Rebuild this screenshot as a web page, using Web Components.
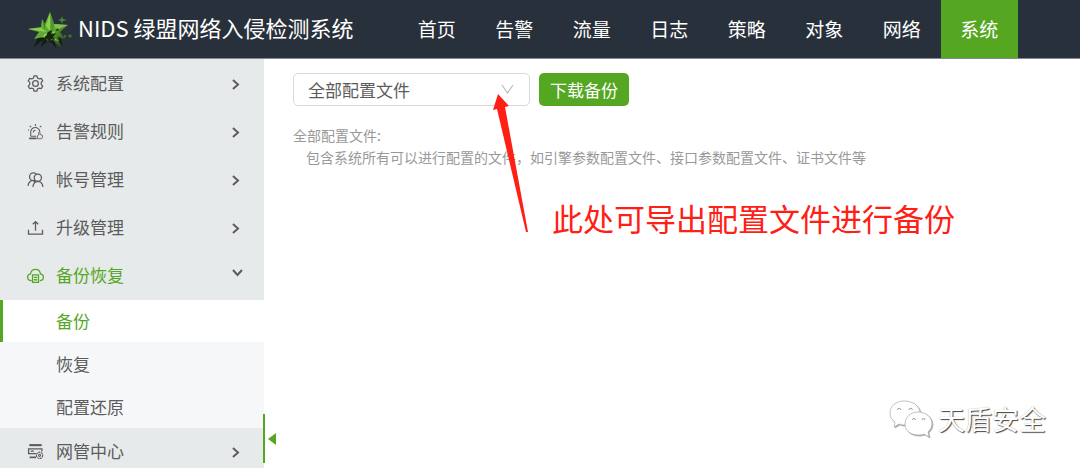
<!DOCTYPE html>
<html lang="zh-CN">
<head>
<meta charset="utf-8">
<title>NIDS 绿盟网络入侵检测系统</title>
<style>
  :root {
    --green: #55a722;
    --dark: #28313b;
    --side: #e6eaeb;
    --sub: #f5f7f9;
    --ink: #5c5c5c;
  }
  body {
    margin: 0;
    background: #fff;
    font-family: "Noto Sans CJK SC", "Noto Sans", sans-serif;
    color: var(--ink);
  }
</style>
</head>
<body>
<nids-app></nids-app>
<script>
const ICONS = {
  gear: '<path d="M6.700.8h2.600l.6 2 1.600.9 2-.5 1.300 2.300-1.400 1.500v2l1.400 1.500-1.300 2.300-2-.5-1.600.9-.6 2H6.700l-.6-2-1.600-.9-2 .5-1.300-2.300L2.600 9V7L1.200 5.500l1.300-2.300 2 .5 1.600-.9z"/><circle cx="8" cy="8" r="2.700"/>',
  alarm: '<path d="M3.500 12.500V9a4.300 4.300 0 0 1 8.600-.8M3.500 12.500h5" stroke-width="1"/><path d="M2 14.500h7" stroke-width="1.600"/><path d="M8 1v1.800M2.600 2.600l1.300 1.300M13.400 2.600l-1.300 1.300M1 6.500h1M8 6.800A2.200 2.200 0 0 0 5.800 9" stroke-width="1"/><path d="M9.800 14.800V12l1.200-.6V8.800c0-.8 1.200-.8 1.200 0v2l2.400.8v1.600l-.8 1.600z" stroke-width=".8"/>',
  users: '<circle cx="6" cy="5.400" r="3.600"/><path d="M1 14c.2-2.600 1.600-4.300 3.400-5"/><circle cx="10.200" cy="6.400" r="3.400" fill="var(--icon-bg)"/><path d="M5.600 15c.2-2.900 1.800-4.800 4.400-5.200 2.800 0 4.600 2 5 5.200M7.800 9.400l-1.600 1"/>',
  upload: '<path d="M1.400 10v4.200h13.200V10M8 11V2.600M5.400 5 8 2.400 10.600 5"/>',
  cloud: '<path d="M4.400 12.800H4C1.900 12.800.6 11.300.6 9.600.6 8 1.800 6.700 3.300 6.500 3.700 3.800 5.700 2.200 8 2.200s4.300 1.600 4.700 4.300c1.500.2 2.700 1.500 2.700 3.100 0 1.700-1.300 3.200-3.400 3.200"/><path d="M5.200 7.400h5.600v7H5.200zM6.500 9.700h3M6.500 12h3"/>',
  server: '<path d="M2.200 2h11.600" stroke-width="2"/><path d="M1.500 5.500h12.500M1.500 5v5h7M14 5v3M3.500 7.700h3"/><path d="M2.500 13.500h6" stroke-width="1.600"/><circle cx="11.800" cy="11.600" r="3" fill="var(--icon-bg)" stroke-width="1" stroke-dasharray="2 .5"/><circle cx="11.800" cy="11.600" r="1" stroke-width="1"/>'
};

class Component extends HTMLElement {
  constructor() {
    super();
    this.attachShadow({ mode: 'open' });
  }
  connectedCallback() {
    const t = document.createElement('template');
    t.innerHTML = this.render();
    this.shadowRoot.replaceChildren(t.content.cloneNode(true));
  }
}

customElements.define('brand-logo', class extends Component {
  render() {
    return `<style>
      :host { display: block; }
      svg { display: block; width: 44px; height: 38px; }
    </style>
    <svg viewBox="0 0 44 38" role="img" aria-label="绿盟">
      <defs><linearGradient id="g" x1="0" y1="0" x2="1" y2="1">
        <stop offset="0" stop-color="#83c94a"/><stop offset=".55" stop-color="#59a52b"/><stop offset="1" stop-color="#1b3510"/>
      </linearGradient></defs>
      <path d="M12 19 6 35 15 28 13 35 21 28 28 36 26 26 35 34 30 20z" fill="#141c15"/>
      <path d="M0 17 13 15 14 7 17 12 22 0 26 12 40 13 32 20 37 27 30 25 33 36 25 28 20 29 15 25 6 27 11 20z" fill="url(#g)"/>
      <path d="M22 0 26 12 24 19z" fill="#4c9427"/>
      <path d="M14 7 17 12 17 19z" fill="#3e8422"/>
      <path d="M22 1 18 14 22 19zM0 17l13-1 6 4z" fill="#8fd052"/>
      <path d="M26 12 40 13 28 18z" fill="#87bd58"/>
      <path d="M20 20l4-2-1 4 5-1-3 4 3 3-5-1-1 4-3-4-4 3 2-5zM29 16l2 2-3 1z" fill="#16290f"/>
      <path d="M24 20l3-1-1 3zM26 26l5 3-4-1zM18 21l-5 5 6-3z" fill="#9cc873"/>
      <path d="M34 4l1 3 4 1-4 1-1 3-1-3-3-1 3-1z" fill="#4f8434"/>
      <path d="M42 22l2 2-2 2-2-2zM36 23l3 1-3 2z" fill="#42752c"/>
    </svg>`;
  }
});

customElements.define('nav-item', class extends Component {
  render() {
    return `<style>
      :host { display: block; height: 100%; }
      a { display: flex; align-items: center; justify-content: center; box-sizing: border-box; height: 100%; padding-bottom: 2px; color: #fff; text-decoration: none; font-size: 19px; white-space: nowrap; }
      :host([active]) a { background: var(--green); }
    </style><a href="#"><slot></slot></a>`;
  }
});

customElements.define('top-bar', class extends Component {
  render() {
    return `<style>
      :host { display: flex; align-items: center; height: 58px; background: var(--dark); border-bottom: 1px solid #858a8e; box-sizing: content-box; }
      .brand { display: flex; align-items: center; flex: 0 0 370px; gap: 6px; padding-left: 28px; color: #fff; font-size: 22px; white-space: nowrap; }
      brand-logo { padding-top: 4px; }
      h1 { margin: 0; font: inherit; line-height: 32px; padding-bottom: 4px; }
      nav { display: grid; grid-template-columns: repeat(8, 1fr); flex: 0 1 620px; height: 100%; }
    </style>
    <div class="brand"><brand-logo></brand-logo><h1>NIDS 绿盟网络入侵检测系统</h1></div>
    <nav><slot></slot></nav>`;
  }
});

customElements.define('menu-item', class extends Component {
  render() {
    return `<style>
      :host { display: block; --icon-bg: var(--side); }
      a { display: flex; align-items: center; height: 48px; padding: 0 22px 0 27px; color: var(--ink); text-decoration: none; font-size: 17px; }
      .icon { width: 17px; height: 17px; margin: 0 12px 2px 0; flex: none; }
      svg { fill: none; stroke: currentColor; stroke-width: 1.2; }
      span { flex: 1; padding-bottom: 3px; }
      .chev { width: 12px; height: 12px; stroke-width: 2; }
      :host([open]) a { color: var(--green); padding-right: 20px; }
      :host([open]) .chev { transform: rotate(90deg); color: var(--ink); margin-bottom: 6px; }
    </style>
    <a href="#"><svg class="icon" viewBox="0 0 16 16" aria-hidden="true">${ICONS[this.getAttribute('icon')]}</svg>
    <span><slot></slot></span>
    <svg class="chev" viewBox="0 0 12 12" aria-hidden="true"><path d="M3 2l5 4.500-5 4.500"/></svg></a>`;
  }
});

customElements.define('sub-item', class extends Component {
  render() {
    return `<style>
      :host { display: block; }
      a { display: flex; align-items: center; box-sizing: border-box; height: 42px; padding: 0 0 2px 53px; border-left: 3px solid transparent; color: var(--ink); text-decoration: none; font-size: 17px; }
      :host([active]) a { background: #fff; color: var(--green); border-color: var(--green); }
    </style><a href="#"><slot></slot></a>`;
  }
});

customElements.define('side-bar', class extends Component {
  render() {
    return `<style>
      :host { display: block; position: relative; box-sizing: border-box; padding-top: 1px; background: var(--side); }
      .clip { overflow: hidden; height: 100%; }
      .sub { display: grid; gap: 1px; background: var(--sub); }
      button { position: absolute; right: -12px; bottom: 5px; width: 13px; height: 49px; padding: 0 0 0 3px; border: 0; border-left: 2px solid var(--green); background: none; }
      button svg { display: block; width: 8px; height: 12px; fill: var(--green); }
    </style>
    <div class="clip">
      <menu-item icon="gear">系统配置</menu-item>
      <menu-item icon="alarm">告警规则</menu-item>
      <menu-item icon="users">帐号管理</menu-item>
      <menu-item icon="upload">升级管理</menu-item>
      <menu-item icon="cloud" open>备份恢复</menu-item>
      <div class="sub">
        <sub-item active>备份</sub-item>
        <sub-item>恢复</sub-item>
        <sub-item>配置还原</sub-item>
      </div>
      <menu-item icon="server">网管中心</menu-item>
    </div>
    <button type="button" aria-label="收起菜单"><svg viewBox="0 0 8 12"><path d="M8 0v12L0 6z"/></svg></button>`;
  }
});

customElements.define('backup-form', class extends Component {
  render() {
    return `<style>
      :host { display: block; }
      form { display: flex; gap: 9px; }
      .box { display: grid; align-items: center; width: 237px; }
      .box > * { grid-area: 1 / 1; }
      select { appearance: none; width: 100%; height: 33px; padding: 0 14px; border: 1px solid #d9d9d9; border-radius: 5px; background: #fff; color: var(--ink); font: inherit; font-size: 17px; line-height: 25px; }
      .box svg { justify-self: end; margin-right: 16px; width: 13px; height: 12px; fill: none; stroke: #bbb; stroke-width: 1.2; pointer-events: none; }
      button { height: 33px; width: 90px; padding: 0; border: 0; border-radius: 5px; background: var(--green); color: #fff; font: inherit; font-size: 17px; white-space: nowrap; }
      dl { margin: 18px 0 0; color: #999; font-size: 14px; line-height: 22px; }
      dd { margin: 0 0 0 13px; }
    </style>
    <form>
      <div class="box">
        <select aria-label="备份内容"><option>全部配置文件</option></select>
        <svg viewBox="0 0 13 12" aria-hidden="true"><path d="M1 1l5.500 8L12 1"/></svg>
      </div>
      <button type="button">下载备份</button>
    </form>
    <dl><dt>全部配置文件:</dt><dd>包含系统所有可以进行配置的文件，如引擎参数配置文件、接口参数配置文件、证书文件等</dd></dl>`;
  }
});

customElements.define('callout-note', class extends Component {
  render() {
    return `<style>
      :host { position: absolute; left: 229px; top: 35px; display: grid; grid-template-columns: 35px auto; column-gap: 24px; color: #ff2015; font-size: 31px; line-height: 40px; white-space: nowrap; pointer-events: none; }
      svg { width: 35px; height: 139px; fill: currentColor; }
      p { margin: 0; padding-top: 104px; }
    </style>
    <svg viewBox="0 0 35 139" aria-hidden="true"><path d="M5 0 16 12 12 13 35 138 33 138 4 15 0 16z"/></svg>
    <p><slot></slot></p>`;
  }
});

customElements.define('water-mark', class extends Component {
  render() {
    return `<style>
      :host { position: absolute; right: 34px; bottom: 29px; display: flex; align-items: center; gap: 5px; color: #fff; font-size: 27px; line-height: 40px; white-space: nowrap; text-shadow: 1px 1px 1px #444, 0 0 1px #aaa; }
      svg { width: 44px; height: 38px; fill: #fff; stroke: #aaa; stroke-width: .7; filter: drop-shadow(1px 1px 0 #aaa); }
    </style>
    <svg viewBox="0 0 44 38" aria-hidden="true">
      <path d="M15 1C7 1 1 6 1 13c0 4 2 7 5 9l-1 5 5-3c2 1 4 1 7 1 8 0 14-5 14-12S24 1 15 1z"/>
      <path d="M8.500 10a1.700 1.700 0 0 1 3.400 0M20 10a1.700 1.700 0 0 1 3.400 0" stroke="#777"/>
      <path d="M29 12c-7 0-13 5-13 12s6 11 13 11c2 0 4 0 6-1l5 3-1-5c2-2 4-5 4-8 0-7-6-12-14-12z"/>
      <path d="M23.500 20a1.500 1.500 0 0 1 3 0M33 20a1.500 1.500 0 0 1 3 0" stroke="#777"/>
    </svg>
    <span><slot></slot></span>`;
  }
});

customElements.define('nids-app', class extends Component {
  render() {
    return `<style>
      :host { display: flex; flex-direction: column; height: 100vh; overflow: hidden; }
      .body { display: grid; grid-template-columns: 264px 1fr; grid-template-rows: minmax(0, 1fr); flex: 1; min-height: 0; }
      main { position: relative; padding: 14px 29px; }
      side-bar { min-height: 0; z-index: 1; }
    </style>
    <top-bar>
      <nav-item>首页</nav-item><nav-item>告警</nav-item><nav-item>流量</nav-item><nav-item>日志</nav-item>
      <nav-item>策略</nav-item><nav-item>对象</nav-item><nav-item>网络</nav-item><nav-item active>系统</nav-item>
    </top-bar>
    <div class="body">
      <side-bar></side-bar>
      <main>
        <backup-form></backup-form>
        <callout-note>此处可导出配置文件进行备份</callout-note>
        <water-mark>天盾安全</water-mark>
      </main>
    </div>`;
  }
});
</script>
</body>
</html>
